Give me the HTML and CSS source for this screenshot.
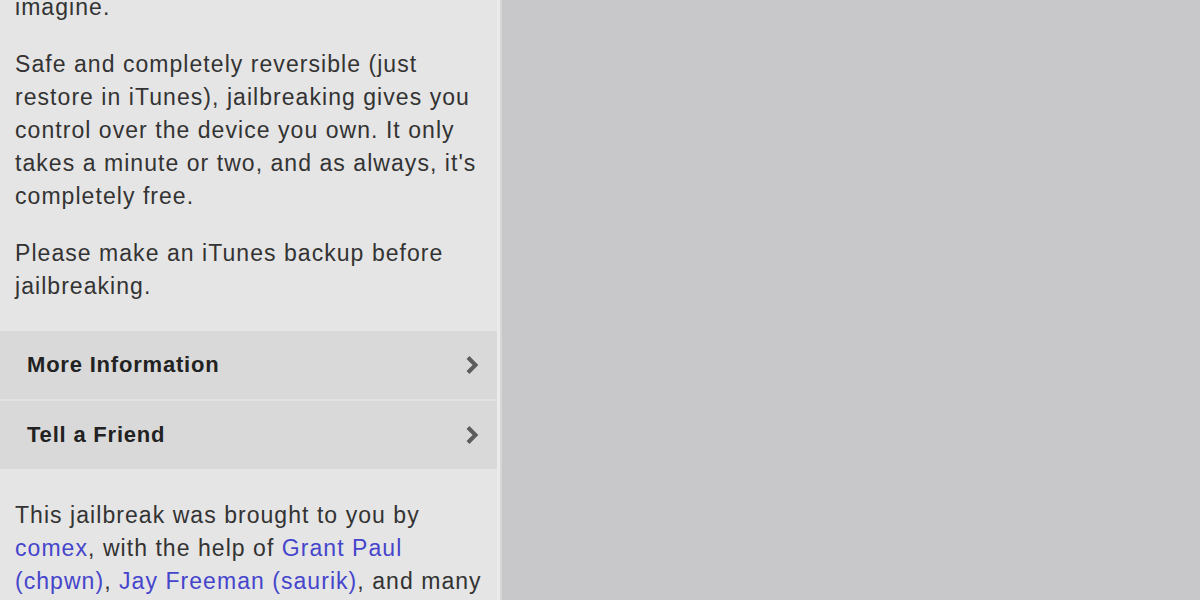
FILE: index.html
```html
<!DOCTYPE html>
<html>
<head>
<meta charset="utf-8">
<link rel="stylesheet" href="styles.css">
</head>
<body>
<div class="screen">
  <div class="panel">
    <div class="intro">
      <p class="para">imagine.</p>
      <p class="para">Safe and completely reversible (just restore in iTunes), jailbreaking gives you control over the device you own. It only takes a minute or two, and as always, it's completely free.</p>
      <p class="para">Please make an iTunes backup before jailbreaking.</p>
    </div>
    <div class="menu">
      <div class="row"><span class="label">More Information</span><span class="chev"><svg width="16" height="22" viewBox="0 0 16 22"><path d="M4 3.5 L11.5 11 L4 18.5" fill="none" stroke="#5c5c5c" stroke-width="4" stroke-linejoin="miter"/></svg></span></div>
      <div class="row"><span class="label">Tell a Friend</span><span class="chev"><svg width="16" height="22" viewBox="0 0 16 22"><path d="M4 3.5 L11.5 11 L4 18.5" fill="none" stroke="#5c5c5c" stroke-width="4" stroke-linejoin="miter"/></svg></span></div>
    </div>
    <div class="credits">
      <p class="para">This jailbreak was brought to you by <a class="link">comex</a>, with the help of <a class="link">Grant Paul (chpwn)</a>, <a class="link">Jay Freeman (saurik)</a>, and many</p>
    </div>
  </div>
  <div class="side"></div>
</div>
</body>
</html>
```
FILE: styles.css
```css
html, body {
  margin: 0;
  padding: 0;
  height: 100%;
  overflow: hidden;
}
body {
  background: #c8c8ca;
  font-family: "Liberation Sans", Arial, sans-serif;
}
.screen {
  display: flex;
  width: 1200px;
  height: 600px;
}
.panel {
  width: 497px;
  background: #e5e5e5;
  border-right: 3px solid #ebebeb;
  box-shadow: 2px 0 0 #d6d6d6;
  display: flex;
  flex-direction: column;
  position: relative;
  z-index: 1;
}
.side {
  flex: 1;
  background: #c8c8ca;
}
.intro {
  padding: 0 12px 28px 15px;
  margin-top: -9px;
}
.para {
  margin: 0 0 24px 0;
  font-size: 23px;
  letter-spacing: 1.05px;
  line-height: 33px;
  color: #333333;
}
.intro .para:last-child {
  margin-bottom: 0;
}
.menu {
  display: flex;
  flex-direction: column;
}
.row {
  height: 68px;
  background: #d9d9d9;
  display: flex;
  align-items: center;
  justify-content: space-between;
  padding: 0 17px 0 27px;
  border-bottom: 2px solid #e2e2e2;
}
.row:last-child {
  border-bottom: none;
}
.label {
  font-size: 22px;
  font-weight: bold;
  letter-spacing: 0.8px;
  color: #222222;
}
.chev {
  display: flex;
}
.credits {
  padding: 30px 12px 0 15px;
}
.link {
  color: #4545cc;
  text-decoration: none;
}
```
